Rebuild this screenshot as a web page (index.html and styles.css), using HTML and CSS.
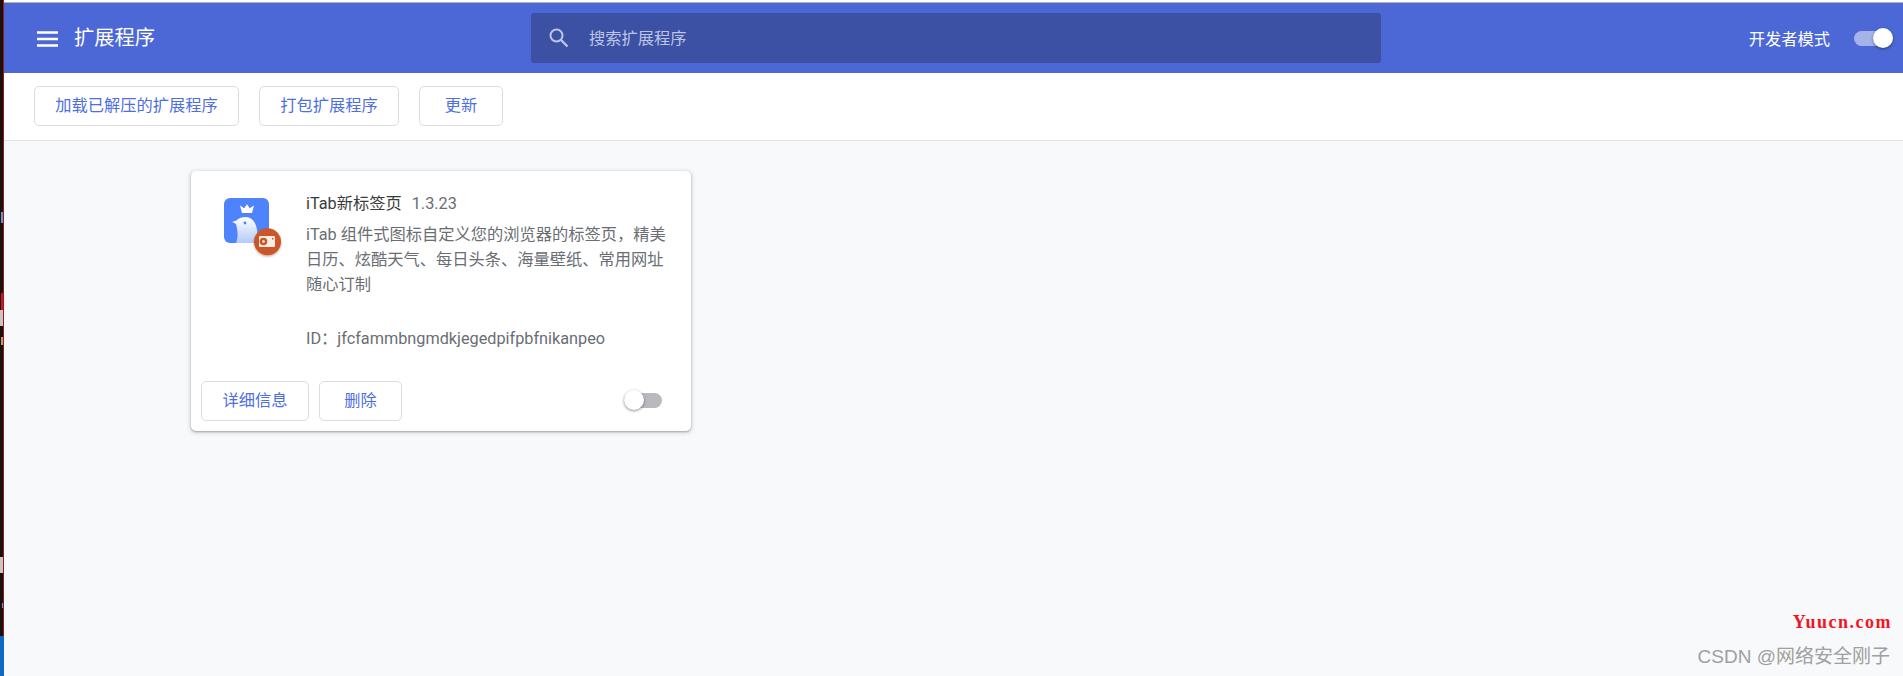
FILE: index.html
```html
<!DOCTYPE html>
<html lang="zh">
<head>
<meta charset="utf-8">
<title>扩展程序</title>
<link rel="stylesheet" href="styles.css">
</head>
<body>
<div class="strip">
  <i class="strip-mark strip-blue-a"></i>
  <i class="strip-mark strip-red"></i>
  <i class="strip-mark strip-gray-a"></i>
  <i class="strip-mark strip-gold"></i>
  <i class="strip-mark strip-gray-b"></i>
  <i class="strip-mark strip-blue-c"></i>
  <i class="strip-mark strip-blue-b"></i>
</div>
<div class="app">
  <header class="topbar">
    <div class="brand">
      <svg class="menu-icon" width="21" height="16" viewBox="0 0 21 16"><path d="M0 1.5h21M0 8h21M0 14.500h21" stroke="#fff" stroke-width="2.600" fill="none"/></svg>
      <span class="brand-title">扩展程序</span>
    </div>
    <div class="search">
      <svg class="search-icon" width="20" height="20" viewBox="0 0 20 20"><circle cx="7.500" cy="7.500" r="6" fill="none" stroke="#bcc5e6" stroke-width="2"/><path d="M12 12l6.500 6.500" stroke="#bcc5e6" stroke-width="2.400" fill="none"/></svg>
      <span class="search-text">搜索扩展程序</span>
    </div>
    <div class="devmode">
      <span>开发者模式</span>
      <div class="toggle toggle-on"><span class="knob"></span></div>
    </div>
  </header>
  <nav class="toolbar">
    <button class="btn btn-load">加载已解压的扩展程序</button>
    <button class="btn btn-pack">打包扩展程序</button>
    <button class="btn btn-update">更新</button>
  </nav>
  <main class="content">
    <section class="card">
      <div class="card-main">
        <div class="icon-wrap">
          <svg width="60" height="60" viewBox="0 0 60 60">
            <defs>
              <linearGradient id="bird" x1="0" y1="0" x2="0" y2="1"><stop offset="0" stop-color="#fff"/><stop offset="1" stop-color="#b4caf9"/></linearGradient>
              <clipPath id="tile"><rect x="0" y="0" width="45" height="45" rx="6"/></clipPath>
              <filter id="shade" x="-30%" y="-30%" width="160%" height="160%"><feDropShadow dx="0" dy="1" stdDeviation="1.200" flood-color="#000" flood-opacity=".35"/></filter>
            </defs>
            <rect x="0" y="0" width="45" height="45" rx="6" fill="#4f83fb"/>
            <path d="M18 15l-2-7.500 4.200 2.700 2.800-4 2.800 4 4.200-2.700-2 7.500z" fill="#fff"/>
            <g clip-path="url(#tile)"><path d="M12 45c3-8 1-14 0-19-2-1-3-2-4-2 3-1 5-2 5-2 3-3 9-4 13-2 6 3 8 11 8 25z" fill="url(#bird)"/></g>
            <circle cx="21" cy="25" r="1.400" fill="#4f83fb"/>
            <circle cx="43.500" cy="43.700" r="13.500" fill="#cd5626" filter="url(#shade)"/>
            <rect x="35" y="38" width="16" height="11" rx="1" fill="#fbeee8"/>
            <circle cx="39.500" cy="43.500" r="3.800" fill="#cd5626"/>
            <circle cx="39.500" cy="43.500" r="1.300" fill="#fbeee8"/>
            <rect x="48" y="40" width="1.500" height="1.500" fill="#cd5626"/>
          </svg>
        </div>
        <div class="info">
          <div class="title-row"><span class="ext-name">iTab新标签页</span><span class="ext-version">1.3.23</span></div>
          <p class="desc">iTab 组件式图标自定义您的浏览器的标签页，精美日历、炫酷天气、每日头条、海量壁纸、常用网址随心订制</p>
          <p class="ext-id">ID：jfcfammbngmdkjegedpifpbfnikanpeo</p>
        </div>
      </div>
      <div class="card-actions">
        <button class="btn btn-detail">详细信息</button>
        <button class="btn btn-remove">删除</button>
        <div class="toggle toggle-off"><span class="knob"></span></div>
      </div>
    </section>
  </main>
</div>
<div class="mark-yuucn">Yuucn.com</div>
<div class="mark-csdn">CSDN @网络安全刚子</div>
</body>
</html>
```
FILE: styles.css
```css
* { box-sizing: border-box; }
html, body { margin: 0; height: 100%; overflow: hidden; }
body {
  display: flex;
  height: 676px;
  position: relative;
  font-family: Roboto, "Noto Sans CJK SC", sans-serif;
  background: #f8f9fb;
}
.strip {
  width: 4px;
  flex: none;
  position: relative;
  background: #141212;
  border-right: 1px solid #a01414;
}
.strip-mark { position: absolute; display: block; }
.strip-blue-a { left: 1px; top: 212px; height: 11px; width: 2px; background: #5f96d4; }
.strip-red { left: 1px; top: 293px; height: 17px; width: 2px; background: #c8182a; }
.strip-gray-a { left: 0; top: 310px; height: 16px; width: 3px; background: #c9c6c4; }
.strip-gold { left: 1px; top: 337px; height: 8px; width: 2px; background: #b8a468; }
.strip-gray-b { left: 0; top: 557px; height: 16px; width: 3px; background: #c9c6c4; }
.strip-blue-c { left: 2px; top: 603px; height: 5px; width: 1px; background: #5a9be0; }
.strip-blue-b { left: 0; top: 636px; bottom: 0; width: 4px; background: #1067c4; }
.app {
  flex: 1;
  min-width: 0;
  display: flex;
  flex-direction: column;
  padding-top: 2px;
  background: #fff;
}
.topbar {
  height: 71px;
  flex: none;
  display: grid;
  grid-template-columns: 527px 850px 1fr;
  align-items: center;
  background: #4c68d6;
  border-top: 1px solid #b4b4b4;
  color: #fff;
}
.brand { display: flex; align-items: center; padding-left: 33px; }
.menu-icon { display: block; margin-top: 1px; }
.brand-title { margin-left: 16px; font-size: 20.300px; line-height: 24px; }
.search {
  height: 50px;
  display: flex;
  align-items: center;
  padding-left: 18px;
  background: #3c50a4;
  border-radius: 3px;
}
.search-icon { display: block; }
.search-text { margin: -2px 0 0 20px; font-size: 16.250px; color: #bcc5e6; }
.devmode {
  display: flex;
  align-items: center;
  justify-content: flex-end;
  padding-right: 11px;
  font-size: 16.250px;
}
.devmode .toggle { margin-left: 24px; }
.toolbar {
  height: 68px;
  flex: none;
  display: flex;
  align-items: center;
  padding: 0 0 2px 30px;
  gap: 20px;
  background: #fff;
  border-bottom: 1px solid #dfe1e5;
}
.btn {
  height: 40px;
  padding: 0;
  background: #fff;
  border: 1px solid #dadce0;
  border-radius: 5px;
  color: #4f6fe0;
  font: 16.250px/20px Roboto, "Noto Sans CJK SC", sans-serif;
}
.btn-load { width: 205px; }
.btn-pack { width: 140px; }
.btn-update { width: 84px; }
.btn-detail { width: 108px; }
.btn-remove { width: 83px; }
.content { flex: 1; padding: 30px 0 0 187px; background: #f8f9fb; }
.card {
  width: 500px;
  height: 260px;
  display: flex;
  flex-direction: column;
  background: #fff;
  border-radius: 5px;
  box-shadow: 0 1px 2px rgba(60, 64, 67, .35), 0 1px 4px 1px rgba(60, 64, 67, .18);
}
.card-main {
  flex: 1;
  display: flex;
  padding: 23px 20px 0 33px;
}
.icon-wrap { width: 82px; flex: none; padding-top: 4px; }
.icon-wrap svg { display: block; overflow: visible; }
.info { flex: 1; min-width: 0; }
.title-row { font-size: 16.250px; line-height: 20px; display: flex; }
.ext-name { color: #3a3b3e; }
.ext-version { margin-left: 10px; color: #6a6e73; }
.desc {
  margin: 8px 0 0;
  font-size: 16.250px;
  line-height: 25px;
  color: #6a6e73;
}
.ext-id {
  margin: 32px 0 0;
  font-size: 16.250px;
  line-height: 20px;
  color: #6a6e73;
}
.card-actions {
  height: 50px;
  flex: none;
  display: flex;
  align-items: flex-start;
  gap: 10px;
  padding-left: 10px;
}
.toggle { position: relative; width: 38px; height: 15px; border-radius: 8px; flex: none; }
.toggle-on { background: #a5b3e9; }
.toggle-on .knob { right: -1px; }
.toggle-off { background: #b9babe; margin: 12px 29px 0 auto; }
.toggle-off .knob { left: 0; }
.knob {
  position: absolute;
  top: -3px;
  width: 20px;
  height: 20px;
  border-radius: 50%;
  background: #fff;
  box-shadow: 0 1px 3px rgba(0, 0, 0, .45);
}
.mark-yuucn {
  position: absolute;
  right: 11px;
  top: 613px;
  font: bold 18px/18px "Liberation Serif", serif;
  letter-spacing: 1.500px;
  color: #f4141f;
}
.mark-csdn {
  position: absolute;
  right: 13px;
  top: 645px;
  font: 19px/24px "Liberation Sans", "Noto Sans CJK SC", sans-serif;
  color: #a0a0a0;
}
```
